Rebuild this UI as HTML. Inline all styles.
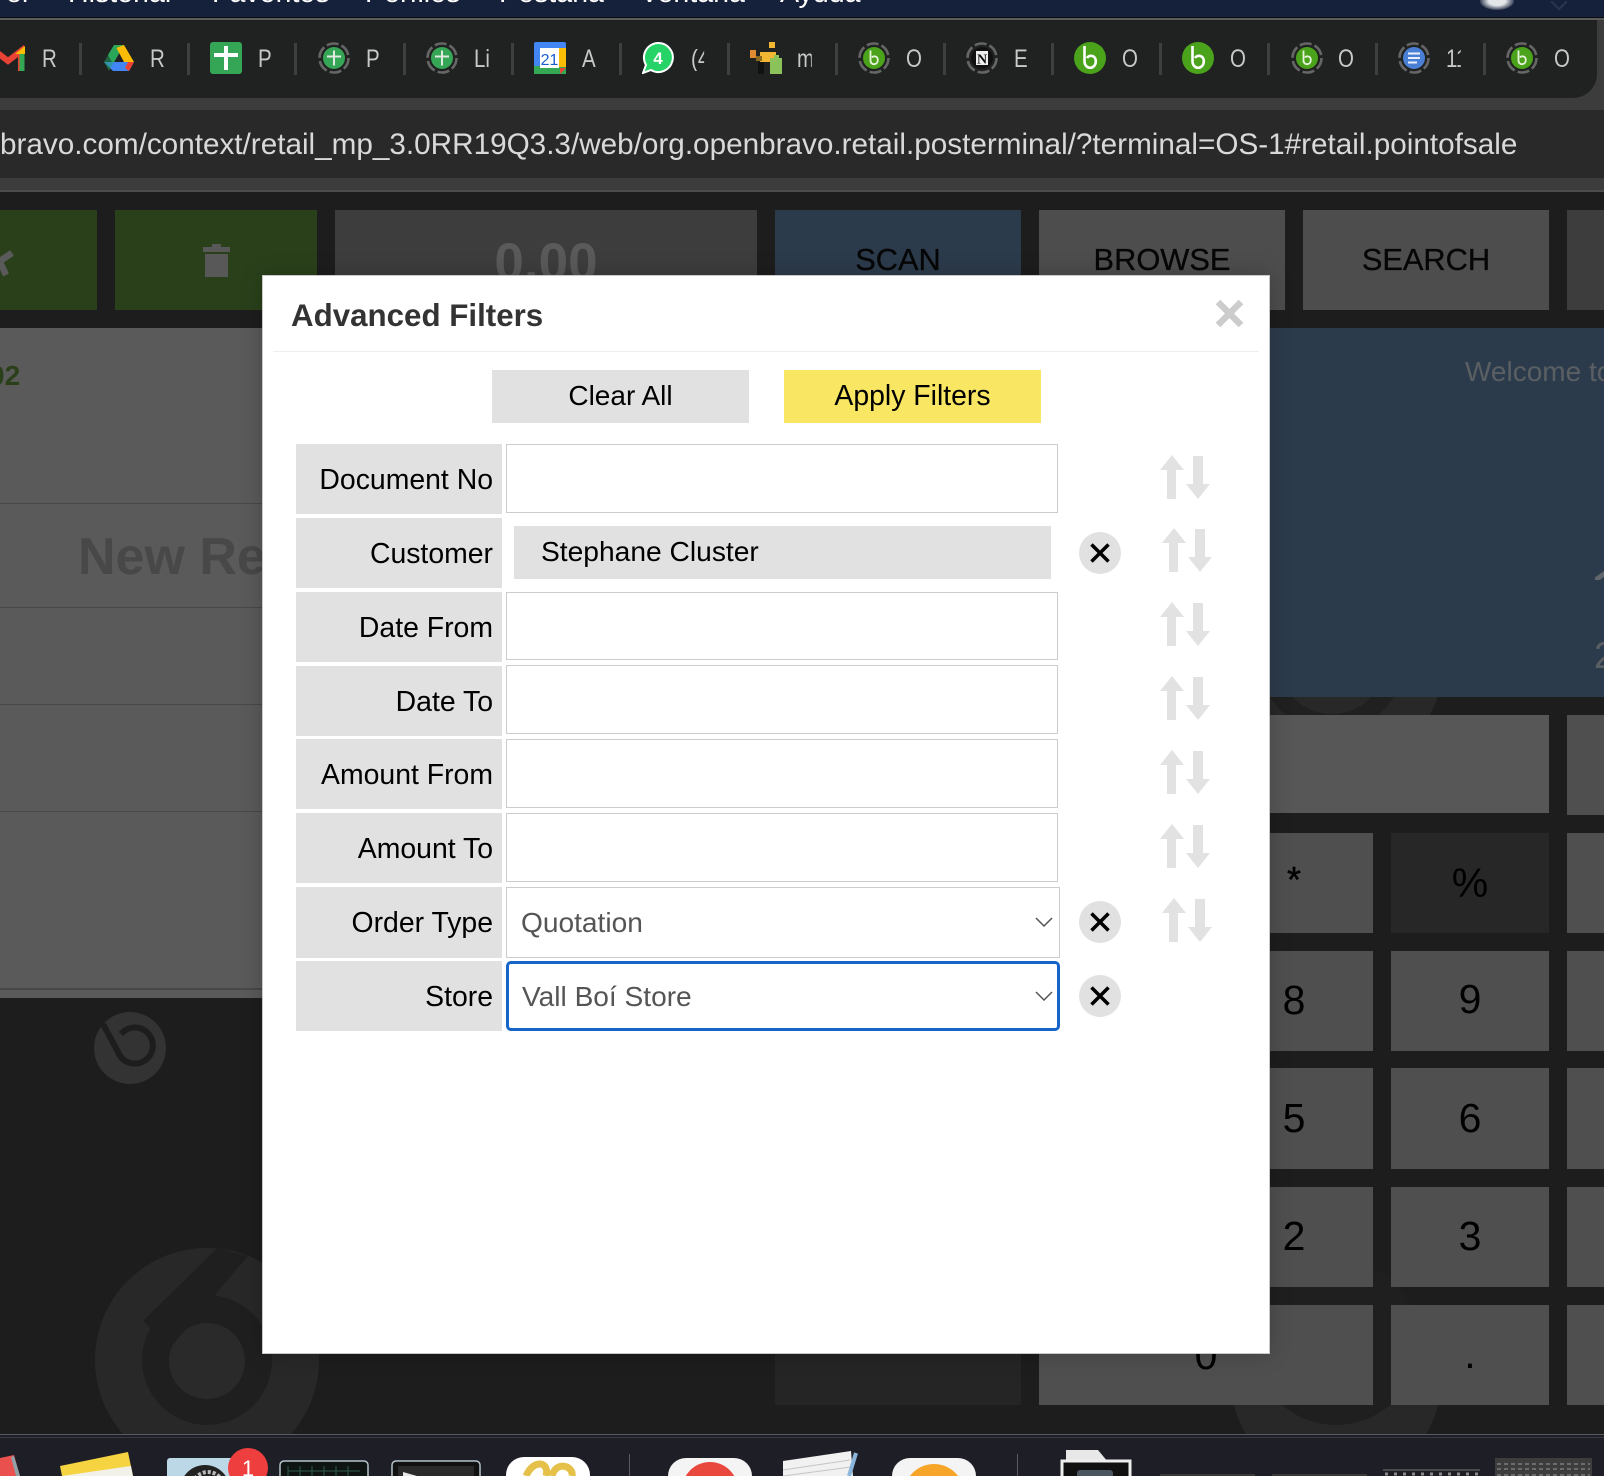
<!DOCTYPE html>
<html><head><meta charset="utf-8"><title>Advanced Filters</title>
<style>
html,body{margin:0;padding:0;width:1604px;height:1476px;overflow:hidden;background:#1d1d1d;font-family:"Liberation Sans",Arial,sans-serif}
.a{position:absolute}
.ml{position:absolute;top:-24px;font-size:28.600px;line-height:34px;color:#fff;white-space:nowrap}
.sep{position:absolute;top:43px;width:3px;height:32px;background:#3e3f3f}
.bt{position:absolute;top:47px;height:24px;line-height:24px;font-size:25px;color:#c8c8c8;overflow:hidden;white-space:nowrap;transform:scaleX(.82);transform-origin:0 0}
.ic{position:absolute;top:42px;width:32px;height:32px}
.btn{position:absolute;top:210px;height:100px}
.bl{position:absolute;top:242px;font-size:30.800px;line-height:36px;color:#060606;text-align:center;-webkit-text-stroke:.3px #060606}
.k{position:absolute;background:#4f4f4f;color:#000;font-size:41px;text-align:center}
.lab{position:absolute;left:296px;width:197px;padding-right:9px;height:70px;line-height:72px;background:#e1e1e1;color:#000;font-size:28.400px;text-align:right;white-space:nowrap}
.inp{position:absolute;left:506px;width:550px;background:#fff;border:1.500px solid #ccc}
.sel{position:absolute;left:506px;padding-left:13px;background:#fff;color:#555;font-size:28.100px;white-space:nowrap}
.circ{position:absolute;left:1079px;width:42px;height:42px}
.arr{position:absolute;width:50px;height:44px}
.ln{position:absolute;left:0;width:262px;height:1px;background:#484848}
</style></head>
<body>
<svg width="0" height="0" style="position:absolute"><defs>
<symbol id="arrows" viewBox="0 0 50 44"><path fill="#e2e2e2" d="M12 0L24 15H16V44H7V15H0ZM33 1H43V29H50L38 44L26 29H33Z"/></symbol>
<symbol id="xc" viewBox="0 0 42 42"><circle cx="21" cy="21" r="21" fill="#e1e1e1"/><path d="M12.5 12.5L29.500 29.500M29.500 12.500L12.500 29.500" stroke="#000" stroke-width="3.500"/></symbol>
<symbol id="chev" viewBox="0 0 18 10"><path d="M1 1L9 9L17 1" fill="none" stroke="#555" stroke-width="1.500"/></symbol>
<symbol id="ring" viewBox="0 0 32 32"><circle cx="16" cy="16" r="14.500" fill="none" stroke="#666" stroke-width="2.600" stroke-dasharray="12 3.200"/></symbol>
<symbol id="rb" viewBox="0 0 32 32"><use href="#ring" width="32" height="32"/><circle cx="16" cy="16" r="11" fill="#4ba31c"/><path d="M12.500 8.500V18.500C12.500 23.500 19.800 23.500 19.800 18C19.800 14 15.500 13.500 14 15.500" fill="none" stroke="#e8f3dc" stroke-width="1.800"/></symbol>
<symbol id="sb" viewBox="0 0 32 32"><circle cx="16" cy="16" r="16" fill="#4ba31c"/><path d="M10.500 4V19C10.500 28 21.800 28 21.800 19C21.800 13 15 12.500 13 16" fill="none" stroke="#fff" stroke-width="2.600"/></symbol>
<symbol id="rp" viewBox="0 0 32 32"><use href="#ring" width="32" height="32"/><circle cx="16" cy="16" r="11" fill="#35a556"/><path d="M16 8.500V23.500M9 14.500H23" stroke="#dfe9e0" stroke-width="2"/></symbol>
</defs></svg>

<!-- menu bar -->
<div class="a" style="left:0;top:0;width:1604px;height:17px;background:#15203a"></div>
<div class="ml" style="left:6px">er</div>
<div class="ml" style="left:68px">Historial</div>
<div class="ml" style="left:212px">Favoritos</div>
<div class="ml" style="left:365px">Perfiles</div>
<div class="ml" style="left:499px">Pestaña</div>
<div class="ml" style="left:640px">Ventana</div>
<div class="ml" style="left:780px">Ayuda</div>
<div class="a" style="left:1480px;top:-8px;width:34px;height:18px;border-radius:50%;background:radial-gradient(ellipse at center,#e4e7ea 35%,rgba(200,205,215,.15) 72%,transparent 100%)"></div>
<div class="a" style="left:1553px;top:-4px;width:10px;height:10px;border-right:2px solid #2b3550;border-bottom:2px solid #2b3550;transform:rotate(45deg)"></div>
<div class="a" style="left:0;top:17px;width:1604px;height:1px;background:#0a0a0a"></div>
<div class="a" style="left:0;top:18px;width:1604px;height:2px;background:#5c5c5c"></div>

<!-- browser chrome -->
<div class="a" style="left:0;top:20px;width:1604px;height:78px;background:#3c3c3c"></div>
<div class="a" style="left:0;top:20px;width:1597px;height:78px;background:#202221;border-bottom-right-radius:24px"></div>
<div class="a" style="left:0;top:98px;width:1604px;height:12px;background:#3c3c3c"></div>
<div class="a" style="left:0;top:110px;width:1604px;height:68px;background:#292929"></div>
<div class="a" style="left:0;top:178px;width:1604px;height:12px;background:#3c3c3c"></div>
<div class="a" style="left:0;top:190px;width:1604px;height:2px;background:#4d4d4d"></div>
<div class="a" style="left:0;top:125px;height:40px;line-height:40px;font-size:29.700px;color:#d9d9d9;white-space:nowrap">bravo.com/context/retail_mp_3.0RR19Q3.3/web/org.openbravo.retail.posterminal/?terminal=OS-1#retail.pointofsale</div>

<!-- bookmarks -->
<svg class="ic" style="left:-9px;top:45px;width:34px;height:26px" viewBox="0 0 34 26"><path d="M4 26V6L17 16L30 6V26" fill="none" stroke="#ea4335" stroke-width="6"/><path d="M2 26V8" stroke="#4285f4" stroke-width="6"/><path d="M31 26V8" stroke="#34a853" stroke-width="5"/><path d="M27 8L33 3V8Z" fill="#fbbc04" stroke="#fbbc04" stroke-width="2"/></svg>
<div class="bt" style="left:42px;width:22px">R</div><div class="sep" style="left:79px"></div>
<svg class="ic" style="left:103px;top:44px;height:28px" viewBox="0 0 32 28"><path d="M11 1H21L10 20L5 11Z" fill="#34a853"/><path d="M21 1L31 18H21L13.500 4Z" fill="#fbbc04"/><path d="M5 18H31L26 27H10L1 18Z" fill="#4285f4"/><path d="M25 18H31L26 27L22 24Z" fill="#ea4335"/><path d="M11 1L1 18L6 27L16 9Z" fill="#1fa463" opacity=".5"/></svg>
<div class="bt" style="left:150px;width:22px">R</div><div class="sep" style="left:187px"></div>
<svg class="ic" style="left:210px" viewBox="0 0 32 32"><rect width="32" height="32" rx="3" fill="#35a556"/><path d="M16 4V28M4 13H28" stroke="#fff" stroke-width="4"/></svg>
<div class="bt" style="left:258px;width:22px">P</div><div class="sep" style="left:294px"></div>
<svg class="ic" style="left:318px"><use href="#rp" width="32" height="32"/></svg>
<div class="bt" style="left:366px;width:22px">P</div><div class="sep" style="left:403px"></div>
<svg class="ic" style="left:426px"><use href="#rp" width="32" height="32"/></svg>
<div class="bt" style="left:474px;width:18px">Li</div><div class="sep" style="left:511px"></div>
<svg class="ic" style="left:534px" viewBox="0 0 32 32"><rect width="32" height="32" rx="2" fill="#4285f4"/><rect x="0" y="24" width="32" height="8" fill="#34a853"/><rect x="25" y="6" width="7" height="19" fill="#fbbc04"/><path d="M26 32L32 26H26Z" fill="#ea4335"/><rect x="6" y="6" width="19" height="20" fill="#fff"/><text x="15.500" y="23" font-size="16" text-anchor="middle" fill="#1a5fd0" font-family="Liberation Sans">21</text></svg>
<div class="bt" style="left:582px;width:22px">A</div><div class="sep" style="left:619px"></div>
<svg class="ic" style="left:642px" viewBox="0 0 32 32"><path d="M16 1A14.500 14.500 0 1 1 9 28L1 31L4 23A14.500 14.500 0 0 1 16 1Z" fill="#25d366" stroke="#fff" stroke-width="2"/><text x="16" y="22" font-size="17" font-weight="bold" text-anchor="middle" fill="#fff" font-family="Liberation Sans">4</text></svg>
<div class="bt" style="left:691px;width:16px">(4</div><div class="sep" style="left:727px"></div>
<svg class="ic" style="left:750px" viewBox="0 0 32 32" shape-rendering="crispEdges"><rect x="19" y="0" width="6" height="6" fill="#f2b632"/><rect x="0" y="8" width="6" height="8" fill="#e08a32"/><rect x="10" y="10" width="16" height="10" fill="#f2b632"/><rect x="6" y="14" width="6" height="5" fill="#8a6a20"/><rect x="8" y="20" width="6" height="12" fill="#111"/><rect x="20" y="16" width="12" height="16" fill="#8bc25a"/><rect x="24" y="13" width="5" height="4" fill="#8bc25a"/></svg>
<div class="bt" style="left:797px;width:18px">m</div><div class="sep" style="left:835px"></div>
<svg class="ic" style="left:858px"><use href="#rb" width="32" height="32"/></svg>
<div class="bt" style="left:906px;width:19px">O</div><div class="sep" style="left:943px"></div>
<svg class="ic" style="left:966px" viewBox="0 0 32 32"><use href="#ring" width="32" height="32"/><circle cx="16" cy="16" r="11" fill="#111"/><rect x="9.500" y="8.500" width="13" height="15" fill="#eee" stroke="#111"/><text x="16" y="21.500" font-size="14" font-weight="bold" text-anchor="middle" fill="#111" font-family="Liberation Serif">N</text></svg>
<div class="bt" style="left:1014px;width:17px">E</div><div class="sep" style="left:1051px"></div>
<svg class="ic" style="left:1074px"><use href="#sb" width="32" height="32"/></svg>
<div class="bt" style="left:1122px;width:19px">O</div><div class="sep" style="left:1159px"></div>
<svg class="ic" style="left:1182px"><use href="#sb" width="32" height="32"/></svg>
<div class="bt" style="left:1230px;width:19px">O</div><div class="sep" style="left:1267px"></div>
<svg class="ic" style="left:1291px"><use href="#rb" width="32" height="32"/></svg>
<div class="bt" style="left:1338px;width:19px">O</div><div class="sep" style="left:1375px"></div>
<svg class="ic" style="left:1398px" viewBox="0 0 32 32"><use href="#ring" width="32" height="32"/><circle cx="16" cy="16" r="11" fill="#4a7fd6"/><path d="M10 11.500H22M10 16H22M10 20.500H19" stroke="#eaf0fb" stroke-width="2"/></svg>
<div class="bt" style="left:1446px;width:18px">11</div><div class="sep" style="left:1483px"></div>
<svg class="ic" style="left:1506px"><use href="#rb" width="32" height="32"/></svg>
<div class="bt" style="left:1554px;width:19px">O</div>

<!-- app watermarks -->
<svg class="a" style="left:0;top:192px" width="1604" height="1242" viewBox="0 192 1604 1242">
<circle cx="207" cy="1360" r="112" fill="#282828"/>
<circle cx="207" cy="1360" r="65" fill="#1f1f1f"/>
<circle cx="207" cy="1361" r="38" fill="#2a2a2a"/>
<path d="M217 1248L248 1256L170 1348L143 1321Z" fill="#1f1f1f"/>
<circle cx="1336" cy="1380" r="105" fill="#282828"/>
<circle cx="1336" cy="1342" r="83" fill="#1f1f1f"/>
<circle cx="1332" cy="660" r="112" fill="#282828"/>
<circle cx="1332" cy="660" r="72" fill="#202020"/>
<circle cx="1332" cy="660" r="54" fill="#282828"/>
<rect x="775" y="1353" width="246" height="52" fill="#252525"/>
<circle cx="130" cy="1048" r="36" fill="#333"/>
<path d="M103 1024L118 1052A18 18 0 1 0 121 1034" fill="none" stroke="#1d1d1d" stroke-width="6"/>
</svg>

<!-- top buttons -->
<div class="btn" style="left:0;width:97px;background:#2a401b"></div>
<svg class="a" style="left:0;top:250px" width="14" height="28" viewBox="0 0 14 28"><path d="M12 3L0 11M0 12L6 25" fill="none" stroke="#5a5a5a" stroke-width="6.500"/></svg>
<div class="btn" style="left:115px;width:202px;background:#2a401b"></div>
<svg class="a" style="left:203px;top:243px" width="27" height="34" viewBox="0 0 27 34"><path d="M0 4H9V1H18V4H27V9H0ZM2 11H25V34H2Z" fill="#585858"/></svg>
<div class="btn" style="left:335px;width:422px;background:#3d3d3d"></div>
<div class="a" style="left:335px;top:233px;width:422px;text-align:center;font-size:53px;line-height:60px;font-weight:bold;color:#5a5a5a">0.00</div>
<div class="btn" style="left:775px;width:246px;background:#2c3b4c"></div>
<div class="bl" style="left:775px;width:246px">SCAN</div>
<div class="btn" style="left:1039px;width:246px;background:#4d4d4d"></div>
<div class="bl" style="left:1039px;width:246px">BROWSE</div>
<div class="btn" style="left:1303px;width:246px;background:#4d4d4d"></div>
<div class="bl" style="left:1303px;width:246px">SEARCH</div>
<div class="btn" style="left:1567px;width:37px;background:#3d3d3d"></div>

<!-- left panel -->
<div class="a" style="left:0;top:328px;width:262px;height:670px;background:#5a5a5a"></div>
<div class="ln" style="top:503px"></div><div class="ln" style="top:607px"></div><div class="ln" style="top:704px"></div><div class="ln" style="top:811px"></div><div class="ln" style="top:988px;height:2px"></div>
<div class="a" style="left:-11px;top:360px;font-size:28px;line-height:32px;font-weight:bold;color:#2a401b">02</div>
<div class="a" style="left:78px;top:527px;width:184px;overflow:hidden;font-size:52px;line-height:60px;font-weight:bold;color:#484848;white-space:nowrap">New Receipt</div>

<!-- right panel -->
<div class="a" style="left:1267px;top:328px;width:337px;height:369px;background:#2c3b4c"></div>
<div class="a" style="left:1465px;top:354px;font-size:28px;line-height:36px;color:#5a5f63;white-space:nowrap">Welcome to</div>
<div class="a" style="left:1588px;top:560px;width:16px;height:20px;overflow:hidden"><span class="a" style="left:0;top:-1px;font-size:72px;line-height:72px;color:#62666a">1</span></div>
<div class="a" style="left:1594px;top:635px;font-size:37px;line-height:42px;color:#5a5f63">2</div>

<!-- keypad -->
<div class="k" style="left:1267px;top:715px;width:282px;height:98px;background:#575757"></div>
<div class="k" style="left:1567px;top:715px;width:37px;height:100px"></div>
<div class="k" style="left:1267px;top:833px;width:106px;height:100px"></div>
<div class="a" style="left:1281px;top:860px;width:26px;text-align:center;font-size:36px;line-height:40px;color:#000;-webkit-text-stroke:.5px #000">*</div>
<div class="k" style="left:1391px;top:833px;width:158px;height:100px;line-height:100px;background:#272727">%</div>
<div class="k" style="left:1567px;top:833px;width:37px;height:100px"></div>
<div class="k" style="left:1267px;top:951px;width:106px;height:100px"></div><div class="a" style="left:1274px;top:976px;width:40px;font-size:41px;line-height:48px;text-align:center;color:#000">8</div>
<div class="k" style="left:1391px;top:951px;width:158px;height:100px;line-height:97px">9</div>
<div class="k" style="left:1567px;top:951px;width:37px;height:100px"></div>
<div class="k" style="left:1267px;top:1068px;width:106px;height:101px"></div><div class="a" style="left:1274px;top:1094px;width:40px;font-size:41px;line-height:48px;text-align:center;color:#000">5</div>
<div class="k" style="left:1391px;top:1068px;width:158px;height:101px;line-height:100px">6</div>
<div class="k" style="left:1567px;top:1068px;width:37px;height:101px"></div>
<div class="k" style="left:1267px;top:1187px;width:106px;height:100px"></div><div class="a" style="left:1274px;top:1212px;width:40px;font-size:41px;line-height:48px;text-align:center;color:#000">2</div>
<div class="k" style="left:1391px;top:1187px;width:158px;height:100px;line-height:98px">3</div>
<div class="k" style="left:1567px;top:1187px;width:37px;height:100px"></div>
<div class="k" style="left:1039px;top:1305px;width:334px;height:100px;line-height:100px"><span class="a" style="left:147px;width:40px;top:0">0</span></div>
<div class="k" style="left:1391px;top:1305px;width:158px;height:100px;line-height:98px">.</div>
<div class="k" style="left:1567px;top:1305px;width:37px;height:100px"></div>

<!-- dock -->
<div class="a" style="left:0;top:1434px;width:1604px;height:42px;background:#1e1e26"></div>
<div class="a" style="left:0;top:1434px;width:1604px;height:1px;background:#5a5a5e"></div>
<div class="a" style="left:0;top:1437px;width:1604px;height:1px;background:#3a3a40"></div>
<svg class="a" style="left:0;top:1440px" width="1604" height="36" viewBox="0 1440 1604 36">
<path d="M0 1458L14 1455L20 1476H0Z" fill="#e9504e"/><path d="M14 1456L20 1476H16L11 1457Z" fill="#8fa2a8"/>
<path d="M60 1466L128 1452L133 1476H62Z" fill="#f6d340"/><path d="M62 1476L131 1466L133 1476Z" fill="#f1f1ea"/>
<rect x="167" y="1458" width="70" height="30" rx="3" fill="#bcd7e6"/>
<circle cx="205" cy="1490" r="25" fill="#222"/><circle cx="208" cy="1488" r="16" fill="none" stroke="#bbb" stroke-width="4" stroke-dasharray="3 2"/>
<circle cx="248" cy="1468" r="20" fill="#ef3e3e"/>
<text x="248" y="1476" font-size="22" text-anchor="middle" fill="#fff" font-family="Liberation Sans">1</text>
<rect x="280" y="1461" width="88" height="30" rx="4" fill="#0e1412" stroke="#b6c4cc" stroke-width="1.500"/>
<path d="M288 1471H360M288 1466V1476M300 1466V1476M312 1466V1476M324 1466V1476M336 1466V1476M348 1466V1476" stroke="#2d5a4c"/>
<rect x="392" y="1461" width="88" height="30" rx="4" fill="#111" stroke="#b6c4cc" stroke-width="1.500"/><rect x="398" y="1466" width="76" height="14" fill="#2a2a2a"/><path d="M403 1472L417 1476H403Z" fill="#e8e8e8"/>
<rect x="506" y="1457" width="84" height="40" rx="18" fill="#fff"/><path d="M526 1476C534 1458 550 1462 546 1476M552 1476C556 1460 574 1466 572 1476" fill="none" stroke="#e6c14a" stroke-width="7"/>
<rect x="629" y="1454" width="1" height="22" fill="#5a5a60"/>
<rect x="668" y="1458" width="84" height="40" rx="18" fill="#f4f4f4"/><circle cx="710" cy="1490" r="28" fill="#e9483f"/>
<path d="M783 1461L851 1451L853 1476H783Z" fill="#f1f1f1"/><path d="M783 1470L850 1460M783 1476L851 1467" stroke="#c5c5c5"/><path d="M856 1453L849 1476" stroke="#8ab6dc" stroke-width="4"/>
<rect x="892" y="1458" width="84" height="40" rx="18" fill="#f4f4f4"/><circle cx="934" cy="1494" r="30" fill="#f7a528"/>
<rect x="1017" y="1454" width="1" height="22" fill="#5a5a60"/>
<path d="M1066 1460V1450H1098L1108 1462Z" fill="#e8e8e8"/>
<rect x="1062" y="1461" width="68" height="20" fill="#111" stroke="#eee" stroke-width="3"/><rect x="1077" y="1470" width="36" height="12" rx="3" fill="#4a5560"/>
<rect x="1160" y="1474" width="95" height="2" fill="#3a3a3a"/><rect x="1272" y="1474" width="95" height="2" fill="#3a3a3a"/>
<rect x="1383" y="1469" width="97" height="2" fill="#4a4a4a"/><path d="M1385 1474H1480" stroke="#8a8a8a" stroke-dasharray="3 6" stroke-width="3"/>
<rect x="1495" y="1458" width="97" height="18" fill="#3d3d3d"/><path d="M1497 1464H1590M1497 1469H1590M1497 1475H1590" stroke="#9a9a9a" stroke-dasharray="4 3"/>
</svg>

<!-- modal -->
<div class="a" style="left:263px;top:276px;width:1006px;height:1077px;background:#fff;box-shadow:0 0 0 1px #c8c8c8,0 0 22px rgba(0,0,0,.22)"></div>
<div class="a" style="left:291px;top:297px;font-size:31.300px;line-height:38px;font-weight:bold;color:#333;white-space:nowrap">Advanced Filters</div>
<svg class="a" style="left:1215px;top:299px" width="29" height="29" viewBox="0 0 29 29"><path d="M3 3L26 26M26 3L3 26" stroke="#ccc" stroke-width="6.500"/></svg>
<div class="a" style="left:273px;top:351px;width:986px;height:1px;background:#eee"></div>
<div class="a" style="left:492px;top:370px;width:257px;height:53px;line-height:52px;background:#e1e1e1;color:#000;font-size:28px;text-align:center">Clear All</div>
<div class="a" style="left:784px;top:370px;width:257px;height:53px;line-height:52px;background:#f9e663;color:#000;font-size:28.400px;text-align:center">Apply Filters</div>

<div class="lab" style="top:444px">Document No</div>
<div class="lab" style="top:518px">Customer</div>
<div class="lab" style="top:592px">Date From</div>
<div class="lab" style="top:666px">Date To</div>
<div class="lab" style="top:739px">Amount From</div>
<div class="lab" style="top:813px">Amount To</div>
<div class="lab" style="top:887px;height:71px;line-height:73px">Order Type</div>
<div class="lab" style="top:961px">Store</div>

<div class="inp" style="top:444px;height:67px"></div>
<div class="a" style="left:514px;top:526px;width:510px;height:53px;line-height:50px;padding-left:27px;background:#e1e1e1;color:#000;font-size:28.200px;white-space:nowrap">Stephane Cluster</div>
<div class="inp" style="top:592px;height:66px"></div>
<div class="inp" style="top:665px;height:67px"></div>
<div class="inp" style="top:739px;height:67px"></div>
<div class="inp" style="top:813px;height:67px"></div>
<div class="sel" style="top:887px;width:538px;height:69px;line-height:70px;border:1.500px solid #ccc;padding-left:14px">Quotation</div>
<div class="sel" style="top:961px;width:535px;height:64px;line-height:66px;border:3px solid #1565c8;border-radius:5px">Vall Boí Store</div>
<svg class="a" style="left:1035px;top:917px" width="18" height="10"><use href="#chev" width="18" height="10"/></svg>
<svg class="a" style="left:1035px;top:991px" width="18" height="10"><use href="#chev" width="18" height="10"/></svg>

<svg class="circ" style="top:532px"><use href="#xc" width="42" height="42"/></svg>
<svg class="circ" style="top:901px"><use href="#xc" width="42" height="42"/></svg>
<svg class="circ" style="top:975px"><use href="#xc" width="42" height="42"/></svg>

<svg class="arr" style="left:1160px;top:455px"><use href="#arrows" width="50" height="44"/></svg>
<svg class="arr" style="left:1162px;top:528px"><use href="#arrows" width="50" height="44"/></svg>
<svg class="arr" style="left:1160px;top:602px"><use href="#arrows" width="50" height="44"/></svg>
<svg class="arr" style="left:1160px;top:676px"><use href="#arrows" width="50" height="44"/></svg>
<svg class="arr" style="left:1160px;top:750px"><use href="#arrows" width="50" height="44"/></svg>
<svg class="arr" style="left:1160px;top:824px"><use href="#arrows" width="50" height="44"/></svg>
<svg class="arr" style="left:1162px;top:898px"><use href="#arrows" width="50" height="44"/></svg>
</body></html>
